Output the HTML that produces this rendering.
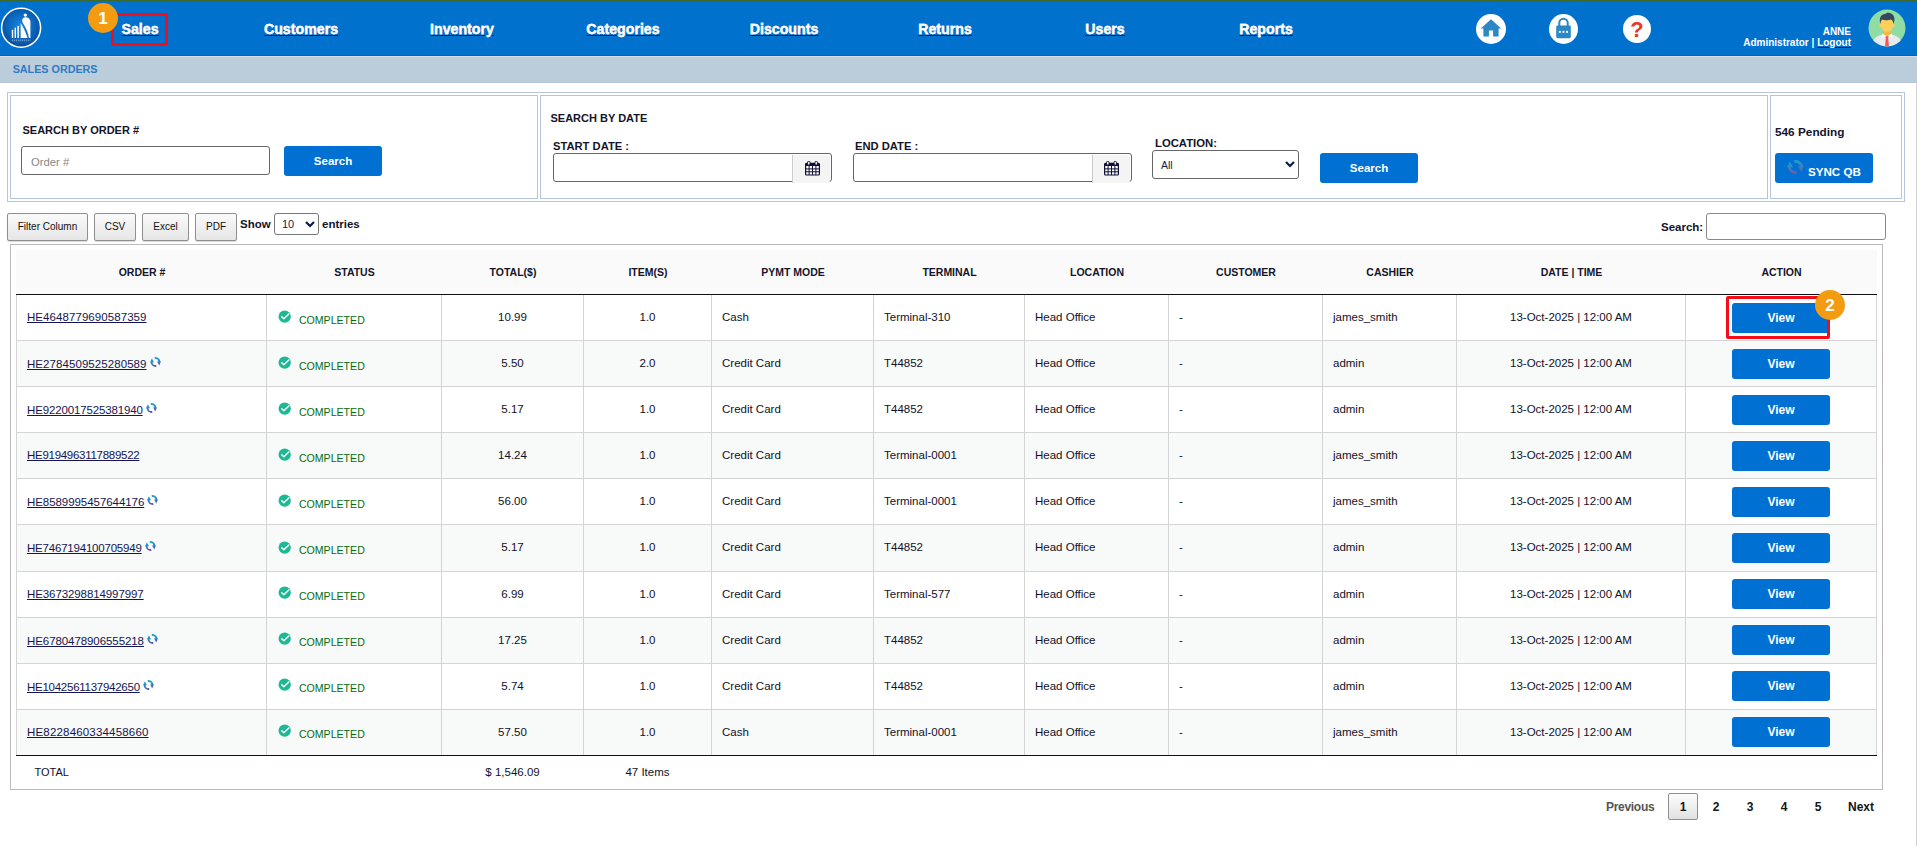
<!DOCTYPE html>
<html lang="en"><head><meta charset="utf-8"><title>Sales Orders</title>
<style>
*{box-sizing:border-box}
html,body{margin:0;padding:0}
body{width:1917px;height:846px;overflow:hidden;position:relative;background:#fff;font-family:"Liberation Sans",Arial,sans-serif;color:#1b1b2b;font-size:11px}
.abs{position:absolute}
#stripe{left:0;top:0;width:1917px;height:2px;background:#3b6a2c;border-bottom:1px solid #246d68}
#nav{left:0;top:2px;width:1917px;height:54px;background:#0072ce;border-bottom:1px solid #0064c2}
#sub{left:0;top:56px;width:1917px;height:27px;background:#bbccdb;border-top:1px solid #d9dfe8;border-bottom:1px solid #b3c5d6}
#sub span{position:absolute;left:12.7px;top:6px;font-size:10.75px;font-weight:bold;color:#2b7cc1;letter-spacing:0}
.nv{position:absolute;top:19px;width:160px;text-align:center;font-size:14.2px;font-weight:bold;color:#0a2458;text-decoration:underline;text-shadow:0 0 1px rgba(0,0,40,.5)}
.nv span{color:#fff;-webkit-text-stroke:0.3px #fff}
.circ{position:absolute;border-radius:50%;background:#fff}
#user{right:66px;top:26px;text-align:right;color:#fff;font-weight:bold;font-size:10px;line-height:11px;white-space:nowrap}
#user u{text-decoration-color:#0a2458}
.badge{position:absolute;z-index:5;width:30px;height:30px;border-radius:50%;background:#f39c12;color:#fff;font-weight:bold;font-size:17px;text-align:center;line-height:32px}
.red{position:absolute;z-index:4;border:3px solid #f20d18;border-radius:2px}
/* search panels */
#outer{left:7px;top:92px;width:1898px;height:110px;border:1px solid #b4c5e0}
.pan{position:absolute;top:95px;height:104px;border:1px solid #b4c5e0}
.lbl{position:absolute;font-weight:bold;font-size:11px;color:#14142a;white-space:nowrap}
.inp{position:absolute;border:1px solid #666;border-radius:3px;background:#fff}
.btn{position:absolute;background:#0070d2;color:#fff;font-weight:bold;font-size:11.5px;text-align:center;border-radius:3px}
.gbtn{position:absolute;top:213px;height:28px;border:1px solid #8f8f8f;border-radius:2px;background:linear-gradient(#fafafa,#e6e6e6);font-size:10px;color:#111;text-align:center;line-height:26px;box-shadow:0 1px 1px rgba(0,0,0,.15)}
/* table */
#wrap{left:10px;top:244px;width:1873px;height:546px;border:1px solid #b9b9b9}
table{position:absolute;left:16px;top:250px;width:1860px;border-collapse:collapse;table-layout:fixed}
th{height:44px;background:#fafafa;font-size:10.5px;font-weight:bold;color:#14142a;text-align:center;border-bottom:1px solid #111;padding:0 0 0 1px}
td{height:46px;border:1px solid #d4d4d4;padding:0 0 1px 10px;font-size:11.5px;color:#111128;white-space:nowrap;vertical-align:middle}
tr.even td{background:#f8f9f9}
th:first-child{box-shadow:-1px 0 0 #fafafa}
td.ctr{text-align:center;padding-left:0}
tfoot td{border:none;border-top:1px solid #111;height:34px}
a.ord{color:#15154f;text-decoration:underline;font-size:11.5px;display:inline-block;position:relative}
a.ord.s{top:1px}
tbody tr:last-child td{border-bottom:1px solid #111}
tr.r6 td{height:47px}
tr.up td.c2,tr.up td.act{padding-bottom:3px}
tr.r6 td.c2{padding-bottom:1px}
.chk{width:13.4px;height:13.4px;vertical-align:middle;position:relative;top:0.3px;margin-left:1.2px}
.cmp{color:#066d0c;font-size:10.6px;margin-left:7.3px;position:relative;top:4px}
.syn{width:11px;height:10px;margin-left:3px;position:relative;top:0px}
.view{display:inline-block;width:98px;height:30px;line-height:31px;top:1.5px;background:#0070d2;color:#fff;font-weight:bold;font-size:12px;border-radius:3px;text-align:center;position:relative;left:0px}
.addon{position:absolute;top:155px;width:38px;height:28px;background:#f4f4f4;border-left:1px solid #ccc;border-radius:0 3px 3px 0}
.pg{position:absolute;top:800px;font-size:12px;font-weight:bold;color:#151515}
</style></head><body>
<svg width="0" height="0" style="position:absolute"><defs>
<linearGradient id="sg1" x1="0" y1="0" x2="0" y2="1"><stop offset="0" stop-color="#1fb0d6"/><stop offset="0.55" stop-color="#2f7fc0"/><stop offset="1" stop-color="#6a4db0"/></linearGradient>
<linearGradient id="sg2" x1="0" y1="0" x2="0" y2="1"><stop offset="0" stop-color="#25c5cf"/><stop offset="0.5" stop-color="#5a8fb8"/><stop offset="1" stop-color="#d0407a"/></linearGradient>
<g id="syncg" fill="url(#sg1)"><path d="M4.6 0.1 A5 5 0 0 1 10.4 4.4 L11 4.4 L9.2 8.6 L7.1 4.4 L8.5 4.4 A3.1 3.1 0 0 0 4.9 2 Z"/><path d="M6.4 9.9 A5 5 0 0 1 0.6 5.2 L0 5.2 L1.9 1.2 L4 5.2 L2.5 5.2 A3.1 3.1 0 0 0 6.1 8 Z"/></g>
<g id="syncq" fill="url(#sg2)"><path d="M4.6 0.1 A5 5 0 0 1 10.4 4.4 L11 4.4 L9.2 8.6 L7.1 4.4 L8.5 4.4 A3.1 3.1 0 0 0 4.9 2 Z"/><path d="M6.4 9.9 A5 5 0 0 1 0.6 5.2 L0 5.2 L1.9 1.2 L4 5.2 L2.5 5.2 A3.1 3.1 0 0 0 6.1 8 Z"/></g>
</defs></svg>
<div id="stripe" class="abs"></div>
<div id="nav" class="abs">
  <a class="nv" style="left:60px"><span>Sales</span></a>
  <a class="nv" style="left:221px"><span>Customers</span></a>
  <a class="nv" style="left:382px"><span>Inventory</span></a>
  <a class="nv" style="left:543px"><span>Categories</span></a>
  <a class="nv" style="left:704px"><span>Discounts</span></a>
  <a class="nv" style="left:865px"><span>Returns</span></a>
  <a class="nv" style="left:1025px"><span>Users</span></a>
  <a class="nv" style="left:1186px"><span>Reports</span></a>
</div>
<div id="sub" class="abs"><span>SALES ORDERS</span></div>

<div id="outer" class="abs"></div>
<div class="pan" style="left:10px;width:528px"></div>
<div class="pan" style="left:540px;width:1228px"></div>
<div class="pan" style="left:1770px;width:132px"></div>

<div class="lbl" style="left:22.5px;top:124px">SEARCH BY ORDER #</div>
<div class="inp" style="left:21px;top:146px;width:249px;height:29px"><span style="position:absolute;left:9px;top:9px;font-size:11.3px;color:#888">Order #</span></div>
<div class="btn" style="left:284px;top:146px;width:98px;height:30px;line-height:31px">Search</div>

<div class="lbl" style="left:550.5px;top:112px">SEARCH BY DATE</div>
<div class="lbl" style="left:553px;top:140px;font-size:11.2px">START DATE :</div>
<div class="lbl" style="left:855px;top:140px;font-size:11.2px">END DATE :</div>
<div class="lbl" style="left:1155px;top:137px;font-size:11.3px">LOCATION:</div>


<!-- logo -->
<svg class="abs" style="left:0;top:7px" width="43" height="42" viewBox="0 0 43 42">
<defs><radialGradient id="lg" cx="50%" cy="45%" r="55%"><stop offset="0" stop-color="#1a86e0"/><stop offset="0.6" stop-color="#0b66bd"/><stop offset="1" stop-color="#084e9b"/></radialGradient></defs>
<circle cx="21.1" cy="20.7" r="19.5" fill="url(#lg)" stroke="#fff" stroke-width="1.5"/>
<g fill="#fff">
<rect x="11.8" y="22.8" width="1.4" height="8.2"/><rect x="14.6" y="20.7" width="1.4" height="10.3"/><rect x="17.4" y="18.9" width="1.5" height="12.1"/>
<path d="M20.6 16 C22.5 19 25.5 24 27.6 31 L20.6 31 Z"/>
<circle cx="25.3" cy="8.1" r="1.7"/>
<path d="M22.1 13.5 C22.4 11 24 10.3 25.3 10.2 C27.6 10.3 30.2 11.5 30.4 14.5 L30.4 31 L28.9 31 C28.4 26 26 21 22.6 15.6 Z"/>
<path d="M11.8 33.4H30.4" stroke="#fff" stroke-width="1.7" stroke-dasharray="1.1 0.9" opacity=".4" fill="none"/>
</g></svg>
<!-- header icons -->
<div class="circ" style="left:1476px;top:14px;width:30px;height:30px"></div>
<svg class="abs" style="left:1480px;top:18px" width="22" height="20" viewBox="0 0 22 20"><path d="M11 1.2 L21.2 10.4 L18.6 10.4 L18.6 18.6 L13.1 18.6 L13.1 12.6 L8.9 12.6 L8.9 18.6 L3.4 18.6 L3.4 10.4 L0.8 10.4 Z" fill="#2c88c4"/></svg>
<div class="circ" style="left:1549px;top:14px;width:29px;height:30px"></div>
<svg class="abs" style="left:1555px;top:17px" width="17" height="22" viewBox="0 0 17 22"><path d="M4.3 9 L4.3 6 A4.2 4.2 0 0 1 12.7 6 L12.7 9" fill="none" stroke="#2c88c4" stroke-width="2"/><rect x="1.2" y="8.4" width="14.6" height="12.8" rx="1.4" fill="#2c88c4"/><rect x="3.9" y="13.9" width="1.9" height="1.9" fill="#fff"/><rect x="7.5" y="13.9" width="1.9" height="1.9" fill="#fff"/><rect x="11.1" y="13.9" width="1.9" height="1.9" fill="#fff"/></svg>
<div class="circ" style="left:1623px;top:15px;width:28px;height:28px"></div>
<div class="abs" style="left:1623px;top:15px;width:28px;height:28px;line-height:29px;text-align:center;color:#e8392b;font-weight:bold;font-size:22px">?</div>
<div id="user" class="abs">ANNE<br>Administrator | <u>Logout</u></div>
<!-- avatar -->
<svg class="abs" style="left:1868px;top:9px" width="38" height="38" viewBox="0 0 38 38">
<defs><clipPath id="av"><circle cx="19" cy="19" r="18.5"/></clipPath></defs>
<circle cx="19" cy="19" r="18.5" fill="#8fdca4"/>
<g clip-path="url(#av)">
<path d="M3 38 C4 29 9 27 15 25.5 L23 25.5 C29 27 34 29 35 38 Z" fill="#e9e9f0"/>
<path d="M15.2 22 L22.8 22 L22.8 26 L19 29 L15.2 26 Z" fill="#f5b840"/>
<path d="M14.2 24.5 L19 27.5 L23.8 24.5 L24.5 28.5 L19 27.5 L13.5 28.5 Z" fill="#fff"/>
<path d="M17.4 27.3 L20.6 27.3 L20.2 29 L21 38 L17 38 L17.8 29 Z" fill="#f2574a"/>
<ellipse cx="19" cy="15.5" rx="6.3" ry="7.6" fill="#fdcf58"/>
<circle cx="12.6" cy="16.5" r="1.5" fill="#fdcf58"/><circle cx="25.4" cy="16.5" r="1.5" fill="#fdcf58"/>
<path d="M12.3 15 C10.5 8 14 4.5 17.5 5 C19 2.5 26.5 4 26.4 10 C26.4 12 26 13.5 25.7 15 C25 12.5 24.5 11.5 23 10.6 C20.5 11.6 16 11.3 14 10.5 C13 11.5 12.6 13 12.3 15 Z" fill="#34495e"/>
</g></svg>
<!-- callouts -->
<div class="red" style="left:110.8px;top:13.3px;width:57.5px;height:32.6px"></div>
<div class="badge" style="left:88px;top:3px">1</div>
<div class="red" style="left:1726px;top:296.4px;width:104.4px;height:42.2px"></div>
<div class="badge" style="left:1815px;top:290px">2</div>

<!-- date inputs -->
<div class="inp" style="left:553px;top:153px;width:279px;height:29px"></div>
<div class="addon" style="left:792px"></div>
<div class="inp" style="left:853px;top:153px;width:279px;height:29px"></div>
<div class="addon" style="left:1092px"></div>
<svg class="abs cal" style="left:805px;top:161px" width="15" height="15" viewBox="0 0 15 15"><use href="#calg"/></svg>
<svg class="abs cal" style="left:1104px;top:161px" width="15" height="15" viewBox="0 0 15 15"><g id="calg"><rect x="0.6" y="2.4" width="13.8" height="11.6" rx="1" fill="#fff" stroke="#0e0e36" stroke-width="1.2"/><rect x="0.6" y="2.4" width="13.8" height="2.6" fill="#0e0e36"/><rect x="2.6" y="0.3" width="2.4" height="3.8" rx="1" fill="#fff" stroke="#0e0e36" stroke-width="1"/><rect x="10" y="0.3" width="2.4" height="3.8" rx="1" fill="#fff" stroke="#0e0e36" stroke-width="1"/><path d="M1 7.9H14M1 10.8H14M4.1 5V14M7.5 5V14M10.9 5V14" stroke="#0e0e36" stroke-width="1" fill="none"/></g></svg>
<div class="inp" style="left:1152px;top:150px;width:147px;height:29px"><span style="position:absolute;left:8px;top:8px;font-size:10.5px;color:#1a1a4a">All</span><svg style="position:absolute;right:3px;top:10px" width="10" height="7" viewBox="0 0 10 7"><path d="M1 1 L5 5 L9 1" fill="none" stroke="#0b1c4a" stroke-width="2.2"/></svg></div>
<div class="btn" style="left:1320px;top:153px;width:98px;height:30px;line-height:30px">Search</div>
<div class="lbl" style="left:1775px;top:125px;font-size:11.8px">546 Pending</div>
<div class="btn" style="left:1775px;top:153px;width:98px;height:30px;line-height:37px;text-align:left;padding-left:33px;font-size:11.6px">SYNC QB</div>
<svg class="abs" style="left:1787px;top:160px;opacity:.62" width="17" height="14" viewBox="0 0 11 10" preserveAspectRatio="none"><use href="#syncq"/></svg>

<!-- toolbar -->
<div class="gbtn" style="left:7px;width:81px">Filter Column</div>
<div class="gbtn" style="left:94px;width:42px">CSV</div>
<div class="gbtn" style="left:142px;width:47px">Excel</div>
<div class="gbtn" style="left:195px;width:42px">PDF</div>
<div class="lbl" style="left:240px;top:218px;font-size:11.5px">Show</div>
<div class="inp" style="left:274px;top:213px;width:45px;height:22px;border-color:#777"><span style="position:absolute;left:7px;top:4px;font-size:11px;color:#1a1a4a">10</span><svg style="position:absolute;right:3px;top:7px" width="10" height="7" viewBox="0 0 10 7"><path d="M1 1 L5 5 L9 1" fill="none" stroke="#0b1c4a" stroke-width="2.2"/></svg></div>
<div class="lbl" style="left:322px;top:218px;font-size:11.5px">entries</div>
<div class="lbl" style="left:1661px;top:221px;font-size:11.5px">Search:</div>
<div class="inp" style="left:1706px;top:213px;width:180px;height:27px;border-color:#888"></div>

<!-- pagination -->
<div class="pg" style="left:1606px;color:#555;letter-spacing:-0.3px">Previous</div>
<div class="abs" style="left:1668px;top:793px;width:30px;height:27px;border:1px solid #8f8f8f;border-radius:2px;background:linear-gradient(#fcfcfc,#e2e2e2)"></div>
<div class="pg" style="left:1668px;width:30px;text-align:center">1</div>
<div class="pg" style="left:1701px;width:30px;text-align:center">2</div>
<div class="pg" style="left:1735px;width:30px;text-align:center">3</div>
<div class="pg" style="left:1769px;width:30px;text-align:center">4</div>
<div class="pg" style="left:1803px;width:30px;text-align:center">5</div>
<div class="pg" style="left:1848px">Next</div>
<div class="abs" style="left:1916px;top:83px;width:1px;height:763px;background:#d4d4d4"></div>

<table>
<colgroup><col style="width:250px"><col style="width:175px"><col style="width:142px"><col style="width:128px"><col style="width:162px"><col style="width:151px"><col style="width:144px"><col style="width:154px"><col style="width:134px"><col style="width:229px"><col style="width:191px"></colgroup>
<thead><tr><th>ORDER #</th><th>STATUS</th><th>TOTAL($)</th><th>ITEM(S)</th><th>PYMT MODE</th><th>TERMINAL</th><th>LOCATION</th><th>CUSTOMER</th><th>CASHIER</th><th>DATE | TIME</th><th>ACTION</th></tr></thead>
<tbody>
<tr class="odd">
<td class="c1"><a class="ord" style="letter-spacing:0.068px">HE4648779690587359</a></td>
<td class="c2"><svg class="chk" viewBox="0 0 14 14"><circle cx="7" cy="7" r="6.4" fill="#1fb894"/><path d="M3.9 7.1 L6.1 9.2 L11.3 4.1" fill="none" stroke="#fff" stroke-width="1.5" stroke-linecap="round" stroke-linejoin="round"/></svg><span class="cmp">COMPLETED</span></td>
<td class="ctr">10.99</td>
<td class="ctr">1.0</td>
<td>Cash</td>
<td>Terminal-310</td>
<td>Head Office</td>
<td>-</td>
<td>james_smith</td>
<td class="ctr">13-Oct-2025 | 12:00 AM</td>
<td class="ctr act"><span class="view">View</span></td>
</tr>
<tr class="even">
<td class="c1"><a class="ord s" style="letter-spacing:0.068px">HE2784509525280589</a><svg class="syn" viewBox="0 0 11 10"><use href="#syncg"/></svg></td>
<td class="c2"><svg class="chk" viewBox="0 0 14 14"><circle cx="7" cy="7" r="6.4" fill="#1fb894"/><path d="M3.9 7.1 L6.1 9.2 L11.3 4.1" fill="none" stroke="#fff" stroke-width="1.5" stroke-linecap="round" stroke-linejoin="round"/></svg><span class="cmp">COMPLETED</span></td>
<td class="ctr">5.50</td>
<td class="ctr">2.0</td>
<td>Credit Card</td>
<td>T44852</td>
<td>Head Office</td>
<td>-</td>
<td>admin</td>
<td class="ctr">13-Oct-2025 | 12:00 AM</td>
<td class="ctr act"><span class="view">View</span></td>
</tr>
<tr class="odd">
<td class="c1"><a class="ord s" style="letter-spacing:-0.149px">HE9220017525381940</a><svg class="syn" viewBox="0 0 11 10"><use href="#syncg"/></svg></td>
<td class="c2"><svg class="chk" viewBox="0 0 14 14"><circle cx="7" cy="7" r="6.4" fill="#1fb894"/><path d="M3.9 7.1 L6.1 9.2 L11.3 4.1" fill="none" stroke="#fff" stroke-width="1.5" stroke-linecap="round" stroke-linejoin="round"/></svg><span class="cmp">COMPLETED</span></td>
<td class="ctr">5.17</td>
<td class="ctr">1.0</td>
<td>Credit Card</td>
<td>T44852</td>
<td>Head Office</td>
<td>-</td>
<td>admin</td>
<td class="ctr">13-Oct-2025 | 12:00 AM</td>
<td class="ctr act"><span class="view">View</span></td>
</tr>
<tr class="even">
<td class="c1"><a class="ord" style="letter-spacing:-0.282px">HE9194963117889522</a></td>
<td class="c2"><svg class="chk" viewBox="0 0 14 14"><circle cx="7" cy="7" r="6.4" fill="#1fb894"/><path d="M3.9 7.1 L6.1 9.2 L11.3 4.1" fill="none" stroke="#fff" stroke-width="1.5" stroke-linecap="round" stroke-linejoin="round"/></svg><span class="cmp">COMPLETED</span></td>
<td class="ctr">14.24</td>
<td class="ctr">1.0</td>
<td>Credit Card</td>
<td>Terminal-0001</td>
<td>Head Office</td>
<td>-</td>
<td>james_smith</td>
<td class="ctr">13-Oct-2025 | 12:00 AM</td>
<td class="ctr act"><span class="view">View</span></td>
</tr>
<tr class="odd">
<td class="c1"><a class="ord s" style="letter-spacing:-0.060px">HE8589995457644176</a><svg class="syn" viewBox="0 0 11 10"><use href="#syncg"/></svg></td>
<td class="c2"><svg class="chk" viewBox="0 0 14 14"><circle cx="7" cy="7" r="6.4" fill="#1fb894"/><path d="M3.9 7.1 L6.1 9.2 L11.3 4.1" fill="none" stroke="#fff" stroke-width="1.5" stroke-linecap="round" stroke-linejoin="round"/></svg><span class="cmp">COMPLETED</span></td>
<td class="ctr">56.00</td>
<td class="ctr">1.0</td>
<td>Credit Card</td>
<td>Terminal-0001</td>
<td>Head Office</td>
<td>-</td>
<td>james_smith</td>
<td class="ctr">13-Oct-2025 | 12:00 AM</td>
<td class="ctr act"><span class="view">View</span></td>
</tr>
<tr class="even r6 up">
<td class="c1"><a class="ord s" style="letter-spacing:-0.204px">HE7467194100705949</a><svg class="syn" viewBox="0 0 11 10"><use href="#syncg"/></svg></td>
<td class="c2"><svg class="chk" viewBox="0 0 14 14"><circle cx="7" cy="7" r="6.4" fill="#1fb894"/><path d="M3.9 7.1 L6.1 9.2 L11.3 4.1" fill="none" stroke="#fff" stroke-width="1.5" stroke-linecap="round" stroke-linejoin="round"/></svg><span class="cmp">COMPLETED</span></td>
<td class="ctr">5.17</td>
<td class="ctr">1.0</td>
<td>Credit Card</td>
<td>T44852</td>
<td>Head Office</td>
<td>-</td>
<td>admin</td>
<td class="ctr">13-Oct-2025 | 12:00 AM</td>
<td class="ctr act"><span class="view">View</span></td>
</tr>
<tr class="odd up">
<td class="c1"><a class="ord" style="letter-spacing:-0.093px">HE3673298814997997</a></td>
<td class="c2"><svg class="chk" viewBox="0 0 14 14"><circle cx="7" cy="7" r="6.4" fill="#1fb894"/><path d="M3.9 7.1 L6.1 9.2 L11.3 4.1" fill="none" stroke="#fff" stroke-width="1.5" stroke-linecap="round" stroke-linejoin="round"/></svg><span class="cmp">COMPLETED</span></td>
<td class="ctr">6.99</td>
<td class="ctr">1.0</td>
<td>Credit Card</td>
<td>Terminal-577</td>
<td>Head Office</td>
<td>-</td>
<td>admin</td>
<td class="ctr">13-Oct-2025 | 12:00 AM</td>
<td class="ctr act"><span class="view">View</span></td>
</tr>
<tr class="even up">
<td class="c1"><a class="ord s" style="letter-spacing:-0.077px">HE6780478906555218</a><svg class="syn" viewBox="0 0 11 10"><use href="#syncg"/></svg></td>
<td class="c2"><svg class="chk" viewBox="0 0 14 14"><circle cx="7" cy="7" r="6.4" fill="#1fb894"/><path d="M3.9 7.1 L6.1 9.2 L11.3 4.1" fill="none" stroke="#fff" stroke-width="1.5" stroke-linecap="round" stroke-linejoin="round"/></svg><span class="cmp">COMPLETED</span></td>
<td class="ctr">17.25</td>
<td class="ctr">1.0</td>
<td>Credit Card</td>
<td>T44852</td>
<td>Head Office</td>
<td>-</td>
<td>admin</td>
<td class="ctr">13-Oct-2025 | 12:00 AM</td>
<td class="ctr act"><span class="view">View</span></td>
</tr>
<tr class="odd up">
<td class="c1"><a class="ord s" style="letter-spacing:-0.260px">HE1042561137942650</a><svg class="syn" viewBox="0 0 11 10"><use href="#syncg"/></svg></td>
<td class="c2"><svg class="chk" viewBox="0 0 14 14"><circle cx="7" cy="7" r="6.4" fill="#1fb894"/><path d="M3.9 7.1 L6.1 9.2 L11.3 4.1" fill="none" stroke="#fff" stroke-width="1.5" stroke-linecap="round" stroke-linejoin="round"/></svg><span class="cmp">COMPLETED</span></td>
<td class="ctr">5.74</td>
<td class="ctr">1.0</td>
<td>Credit Card</td>
<td>T44852</td>
<td>Head Office</td>
<td>-</td>
<td>admin</td>
<td class="ctr">13-Oct-2025 | 12:00 AM</td>
<td class="ctr act"><span class="view">View</span></td>
</tr>
<tr class="even up">
<td class="c1"><a class="ord" style="letter-spacing:0.179px">HE8228460334458660</a></td>
<td class="c2"><svg class="chk" viewBox="0 0 14 14"><circle cx="7" cy="7" r="6.4" fill="#1fb894"/><path d="M3.9 7.1 L6.1 9.2 L11.3 4.1" fill="none" stroke="#fff" stroke-width="1.5" stroke-linecap="round" stroke-linejoin="round"/></svg><span class="cmp">COMPLETED</span></td>
<td class="ctr">57.50</td>
<td class="ctr">1.0</td>
<td>Cash</td>
<td>Terminal-0001</td>
<td>Head Office</td>
<td>-</td>
<td>james_smith</td>
<td class="ctr">13-Oct-2025 | 12:00 AM</td>
<td class="ctr act"><span class="view">View</span></td>
</tr>
</tbody>
<tfoot><tr><td style="padding-left:18px;font-size:11px">TOTAL</td><td></td><td class="ctr">$ 1,546.09</td><td class="ctr">47 Items</td><td colspan="7"></td></tr></tfoot>
</table>
<div id="wrap" class="abs"></div>
</body></html>
